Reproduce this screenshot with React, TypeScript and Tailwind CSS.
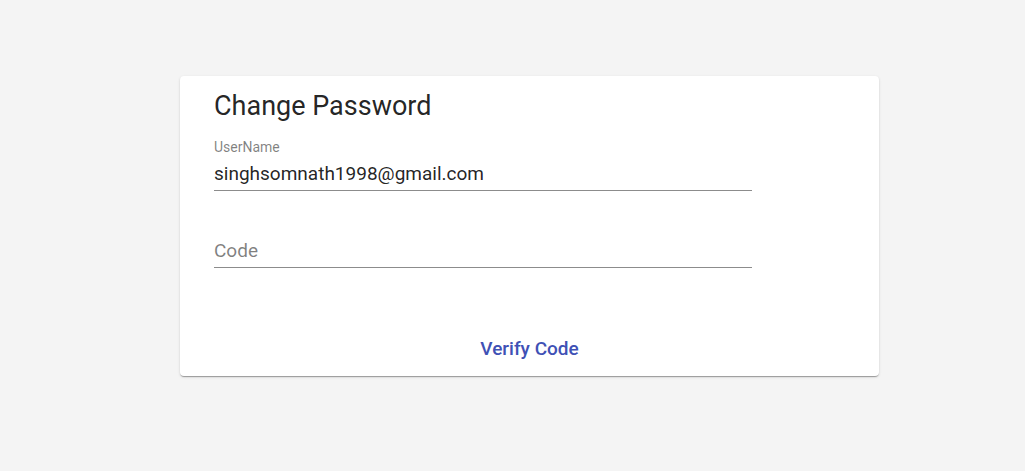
import React from "react";

export default function App() {
  return (
    <div
      className="min-h-[471px] w-full bg-[#f4f4f4] pt-[76px] pl-[180px]"
      style={{ fontFamily: "Roboto, 'Noto Sans', sans-serif" }}
    >
      <div className="flex h-[300px] w-[699px] flex-col rounded-[4px] bg-white px-[34px] pt-[14px] shadow-[0_2px_1px_-1px_rgba(0,0,0,0.2),0_1px_1px_0_rgba(0,0,0,0.14),0_1px_3px_0_rgba(0,0,0,0.12)]">
        <h5 className="text-[27px] leading-[32px] font-normal text-[rgba(0,0,0,0.87)]">
          Change Password
        </h5>
        <div className="mt-[17px] w-[538px]">
          <div className="text-[14px] leading-[16px] text-[rgba(0,0,0,0.5)]">UserName</div>
          <div className="mt-[7px] border-b border-[#8c8c8c] pb-[4px] text-[19px] leading-[24px] text-[rgba(0,0,0,0.87)]">
            singhsomnath1998@gmail.com
          </div>
        </div>
        <div className="mt-[48px] w-[538px]">
          <div className="border-b border-[#8c8c8c] pb-[4px] text-[19px] leading-[24px] text-[rgba(0,0,0,0.5)]">
            Code
          </div>
        </div>
        <div className="mt-[69px] flex justify-center">
          <button className="text-[19px] leading-[24px] font-medium text-[#3f51b5]">Verify Code</button>
        </div>
      </div>
    </div>
  );
}
